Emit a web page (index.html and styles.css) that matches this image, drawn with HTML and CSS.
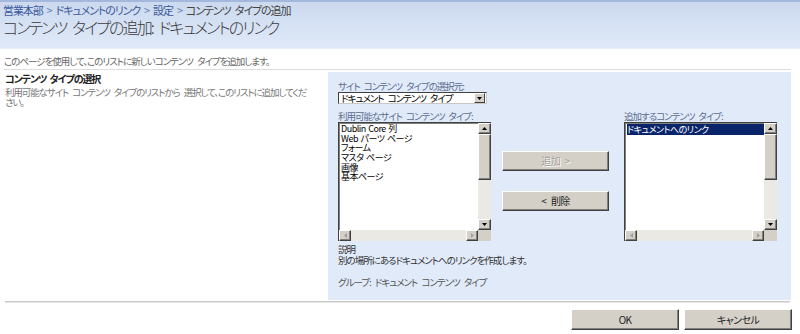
FILE: index.html
```html
<!DOCTYPE html>
<html lang="ja">
<head>
<meta charset="utf-8">
<link rel="stylesheet" href="styles.css">
</head>
<body>
<header class="hdr">
  <div class="crumbs"><a class="lnk">営業本部</a><span class="sep">&gt;</span><a class="lnk">ドキュメントのリンク</a><span class="sep">&gt;</span><a class="lnk">設定</a><span class="sep">&gt;</span><span class="cur">コンテンツ タイプの追加</span></div>
  <h1 class="title">コンテンツ タイプの追加: ドキュメントのリンク</h1>
</header>
<p class="intro">このページを使用して、このリストに新しいコンテンツ タイプを追加します。</p>
<div class="rule"></div>
<section class="row">
  <div class="left">
    <h2 class="sec-h">コンテンツ タイプの選択</h2>
    <p class="sec-d">利用可能なサイト コンテンツ タイプのリストから 選択して、このリストに追加してくだ<br>さい。</p>
  </div>
  <div class="panel">
    <div class="lbl">サイト コンテンツ タイプの選択元:</div>
    <div class="select"><span class="sel-txt">ドキュメント コンテンツ タイプ</span><span class="dd"><svg width="5" height="3" viewBox="0 0 5 3"><path d="M0 0H5L2.5 3Z" fill="#000"/></svg></span></div>
    <div class="pick">
      <div class="col">
        <div class="lbl lbl2">利用可能なサイト コンテンツ タイプ:</div>
        <div class="listbox">
          <div class="items">
            <div class="item">Dublin Core 列</div>
            <div class="item">Web パーツ ページ</div>
            <div class="item">フォーム</div>
            <div class="item">マスタ ページ</div>
            <div class="item">画像</div>
            <div class="item">基本ページ</div>
          </div>
          <div class="vscroll">
            <div class="sbtn"><svg width="5" height="3" viewBox="0 0 5 3"><path d="M0 3H5L2.5 0Z" fill="#000"/></svg></div>
            <div class="thumb"></div>
            <div class="track"></div>
            <div class="sbtn"><svg width="5" height="3" viewBox="0 0 5 3"><path d="M0 0H5L2.5 3Z" fill="#000"/></svg></div>
          </div>
          <div class="hscroll">
            <div class="hbtn"><svg width="3" height="5" viewBox="0 0 3 5"><path d="M3 0V5L0 2.5Z" fill="#a0a0a0"/></svg></div>
            <div class="htrack"></div>
            <div class="hbtn"><svg width="3" height="5" viewBox="0 0 3 5"><path d="M0 0V5L3 2.5Z" fill="#a0a0a0"/></svg></div>
          </div>
          <div class="corner"></div>
        </div>
      </div>
      <div class="mid">
        <button class="btn" disabled>追加 &gt;</button>
        <button class="btn">&lt; 削除</button>
      </div>
      <div class="col">
        <div class="lbl lbl2">追加するコンテンツ タイプ:</div>
        <div class="listbox">
          <div class="items">
            <div class="item selected">ドキュメントへのリンク</div>
          </div>
          <div class="vscroll">
            <div class="sbtn"><svg width="5" height="3" viewBox="0 0 5 3"><path d="M0 3H5L2.5 0Z" fill="#000"/></svg></div>
            <div class="thumb"></div>
            <div class="track"></div>
            <div class="sbtn"><svg width="5" height="3" viewBox="0 0 5 3"><path d="M0 0H5L2.5 3Z" fill="#000"/></svg></div>
          </div>
          <div class="hscroll">
            <div class="hbtn"><svg width="3" height="5" viewBox="0 0 3 5"><path d="M3 0V5L0 2.5Z" fill="#a0a0a0"/></svg></div>
            <div class="htrack"></div>
            <div class="hbtn"><svg width="3" height="5" viewBox="0 0 3 5"><path d="M0 0V5L3 2.5Z" fill="#a0a0a0"/></svg></div>
          </div>
          <div class="corner"></div>
        </div>
      </div>
    </div>
    <div class="info">説明<br>別の場所にあるドキュメントへのリンクを作成します。</div>
    <div class="group">グループ: ドキュメント コンテンツ タイプ</div>
  </div>
</section>
<div class="rule2"></div>
<div class="actions">
  <button class="btn abtn">OK</button>
  <button class="btn abtn">キャンセル</button>
</div>
</body>
</html>
```
FILE: styles.css
```css
* { box-sizing: border-box; }
html, body { margin: 0; padding: 0; background: #fff; }
body {
  font-family: "Noto Sans CJK JP", "Noto Sans", sans-serif;
  font-size: 10px;
  color: #333;
  font-feature-settings: "palt";
  word-spacing: 3px;
  width: 800px;
  height: 334px;
  overflow: hidden;
}
.hdr {
  height: 49px;
  border-top: 2px solid #a3b8dc;
  border-bottom: 1px solid #e6edf8;
  background: linear-gradient(#ccd9ee, #dfe9f9);
  padding: 2px 0 0 3px;
}
.crumbs {
  font-size: 11px;
  line-height: 13px;
  color: #3c5a9b;
  letter-spacing: -1.1px;
  word-spacing: 3px;
}
.lnk { color: #3c5a9b; }
.sep { color: #6680b0; margin: 0 4px; }
.cur { color: #444; }
.title {
  margin: 0;
  font-weight: 300;
  font-size: 16px;
  line-height: 20px;
  color: #3a3a3a;
  letter-spacing: -1.9px;
  word-spacing: 4px;
}
.intro {
  margin: 0;
  padding: 6px 0 0 4px;
  font-size: 9.5px;
  line-height: 12px;
  color: #666;
  letter-spacing: -1px;
}
.rule {
  margin: 2px 9px 0 4px;
  border-top: 1px solid #dcdcdc;
  height: 3px;
}
.row {
  display: flex;
  height: 228px;
}
.left {
  width: 328px;
  padding: 1px 0 0 5px;
}
.sec-h {
  margin: 0;
  font-size: 10px;
  line-height: 12px;
  font-weight: bold;
  color: #222;
  letter-spacing: -1.1px;
  word-spacing: 2px;
}
.sec-d {
  margin: 2px 0 0;
  font-size: 9.5px;
  line-height: 10px;
  color: #777;
  letter-spacing: -1.1px;
}
.panel {
  width: 463px;
  background: #e1eaf9;
  padding: 9px 0 0 10px;
}
.lbl {
  font-size: 9.5px;
  line-height: 10px;
  color: #5c6d8f;
  letter-spacing: -1px;
}
.select {
  margin-top: 1px;
  width: 149px;
  height: 12px;
  background: #fff;
  border-top: 1px solid #404040;
  border-left: 1px solid #404040;
  border-right: 1px solid #c8c8c8;
  border-bottom: 1px solid #c8c8c8;
  display: flex;
  align-items: center;
  padding-left: 2px;
}
.sel-txt {
  flex: 1;
  font-size: 9.5px;
  line-height: 10px;
  color: #000;
  letter-spacing: -1px;
}
.dd {
  width: 11px;
  height: 10px;
  margin-right: 1px;
  background: #d4d0c8;
  border-top: 1px solid #fff;
  border-left: 1px solid #fff;
  border-right: 1px solid #404040;
  border-bottom: 1px solid #404040;
  display: flex;
  align-items: center;
  justify-content: center;
}
.pick {
  display: flex;
  margin-top: 7px;
}
.col { width: 153px; }
.lbl2 { height: 11px; }
.listbox {
  width: 153px;
  height: 119px;
  display: grid;
  grid-template-columns: 1fr 13px;
  grid-template-rows: 1fr 11px;
  border-top: 1px solid #404040;
  border-left: 1px solid #404040;
  background: #fff;
}
.items {
  padding: 0 0 0 1px;
  overflow: hidden;
  border-top: 1px solid #808080;
  border-left: 1px solid #808080;
}
.item {
  font-size: 9px;
  line-height: 9.7px;
  height: 9.7px;
  color: #000;
  letter-spacing: -0.5px;
  word-spacing: 1px;
  white-space: nowrap;
}
.item.selected {
  background: #0a246a;
  color: #fff;
  height: 11px;
  line-height: 11px;
}
.vscroll {
  display: flex;
  flex-direction: column;
  background: #ebe9e4;
}
.sbtn, .hbtn {
  background: #d4d0c8;
  border-top: 1px solid #fff;
  border-left: 1px solid #fff;
  border-right: 1px solid #404040;
  border-bottom: 1px solid #404040;
  box-shadow: inset -1px -1px 0 #808080;
  display: flex;
  align-items: center;
  justify-content: center;
}
.sbtn { height: 11px; }
.thumb {
  height: 46px;
  background: #d4d0c8;
  border-top: 1px solid #fff;
  border-left: 1px solid #fff;
  border-right: 1px solid #404040;
  border-bottom: 1px solid #404040;
  box-shadow: inset -1px -1px 0 #808080;
}
.track { flex: 1; }
.hscroll {
  display: flex;
  background: #ebe9e4;
}
.hbtn { width: 12px; }
.htrack { flex: 1; }
.corner { background: #d4d0c8; }
.mid {
  width: 133px;
  padding: 40px 0 0 11px;
  display: flex;
  flex-direction: column;
  gap: 20px;
}
.btn {
  font-family: "Noto Sans CJK JP", "Noto Sans", sans-serif;
  font-feature-settings: "palt";
  font-size: 10px;
  line-height: 12px;
  padding: 0;
  color: #222;
  background: #d4d0c8;
  border-top: 1px solid #fff;
  border-left: 1px solid #fff;
  border-right: 1px solid #404040;
  border-bottom: 1px solid #404040;
  box-shadow: inset -1px -1px 0 #808080;
  letter-spacing: -0.6px;
  word-spacing: 3px;
}
.mid .btn { width: 107px; height: 20px; }
.btn:disabled { color: #a19e98; text-shadow: 1px 1px 0 #fff; }
.info {
  margin-top: 3px;
  font-size: 9.5px;
  line-height: 10.5px;
  color: #333;
  letter-spacing: -1px;
}
.group {
  margin-top: 12px;
  font-size: 9.5px;
  line-height: 10px;
  color: #555;
  letter-spacing: -1px;
}
.rule2 {
  margin: 1px 10px 0 5px;
  border-top: 1px solid #c8c8c8;
  border-bottom: 1px solid #e6e6e6;
  height: 2px;
}
.actions {
  display: flex;
  justify-content: flex-end;
  gap: 5px;
  padding: 6px 8px 0 0;
}
.abtn { width: 108px; height: 21px; }
```
